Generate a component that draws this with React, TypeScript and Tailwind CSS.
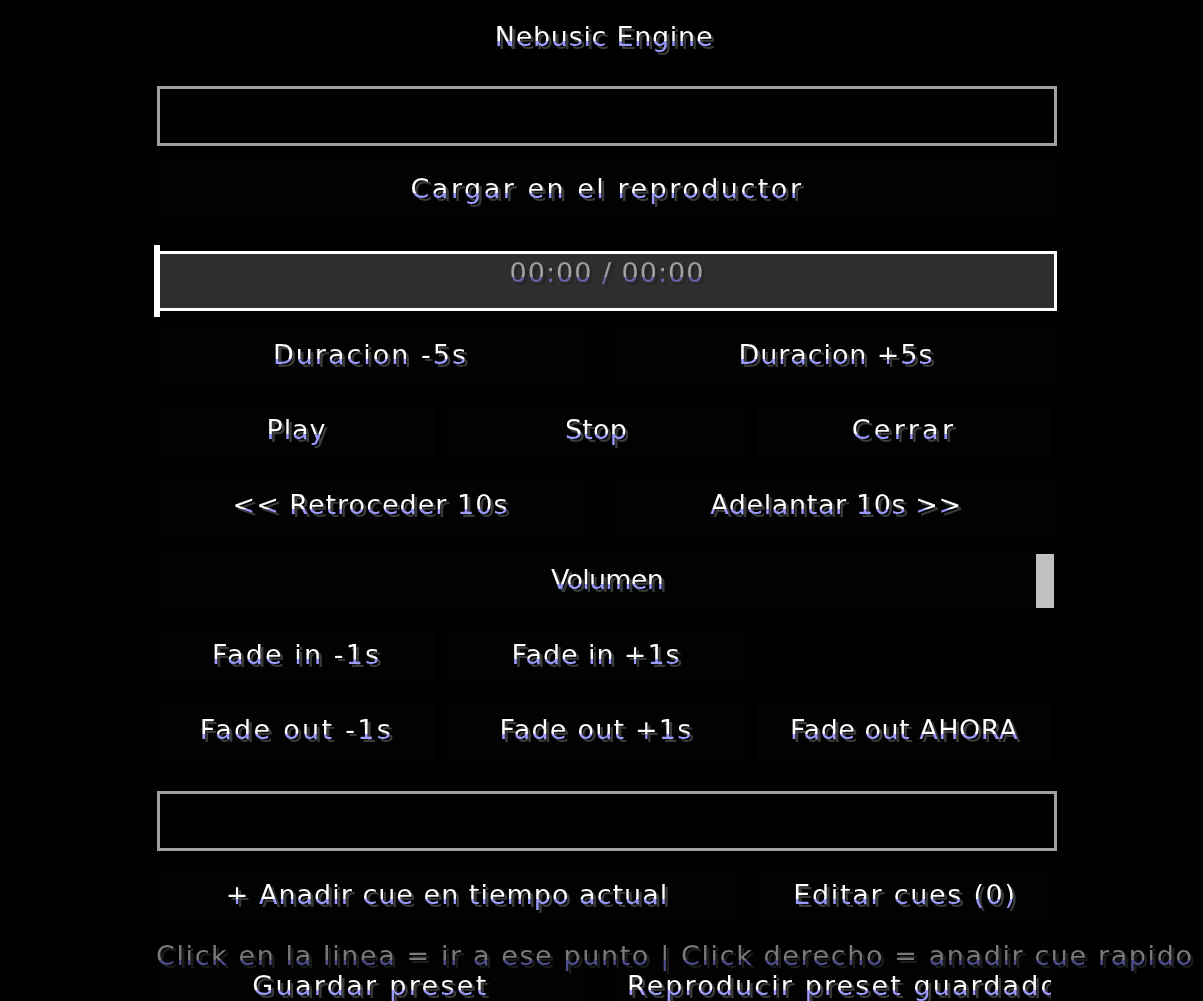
import React from 'react';

type Tone = 'white' | 'grey' | 'dim';

// Minecraft-ish label: white top, lavender bottom rows, hard 1-unit shadow
const TONES: Record<Tone, string> = {
  white: 'bg-[linear-gradient(180deg,#ffffff_19px,#9c9cff_19px)] drop-shadow-[3px_3px_0_#3b3b3b]',
  grey: 'bg-[linear-gradient(180deg,#a0a0a0_19px,#6464a8_19px)] drop-shadow-[3px_3px_0_#262626]',
  dim: 'bg-[linear-gradient(180deg,#7a7a7a_19px,#4e4e8e_19px)] drop-shadow-[3px_3px_0_#1c1c1c]',
};

function McText({ children, tone = 'white', className = '' }: { children: React.ReactNode; tone?: Tone; className?: string }) {
  return (
    <span
      className={`inline-block whitespace-nowrap bg-clip-text text-transparent font-['DejaVu_Sans',sans-serif] text-[27px] leading-[30px] ${TONES[tone]} ${className}`}
    >
      {children}
    </span>
  );
}

function Button({ label, tracking }: { label: string; tracking: string }) {
  return (
    <div className="flex h-[60px] items-center justify-center bg-[#020203] pb-[2px]">
      <McText className={tracking}>{label}</McText>
    </div>
  );
}

function TextField() {
  return <div className="h-[60px] border-[3px] border-[#a0a0a0] bg-black" />;
}

export default function App() {
  return (
    <div className="h-[1001px] w-full overflow-hidden bg-black">
      <div className="ml-[157px] flex w-[900px] flex-col pt-[22px]">
        <div className="flex h-[30px] justify-center pr-[6px]">
          <McText className="tracking-[0.7px]">Nebusic Engine</McText>
        </div>

        <div className="mt-[34px]">
          <TextField />
        </div>

        <div className="mt-[14px]">
          <Button label="Cargar en el reproductor" tracking="tracking-[2.5px]" />
        </div>

        {/* timeline */}
        <div className="relative mt-[31px] flex h-[60px] items-start justify-center border-[3px] border-white bg-[#2e2e2e] pt-[4px]">
          <McText tone="grey" className="tracking-[1px]">00:00 / 00:00</McText>
          <div className="absolute -left-[6px] -top-[9px] h-[72px] w-[6px] bg-white" />
        </div>

        <div className="mt-[15px] grid grid-cols-[427px_442px] gap-x-[31px]">
          <Button label="Duracion -5s" tracking="tracking-[2px]" />
          <Button label="Duracion +5s" tracking="tracking-[0.9px]" />
        </div>

        <div className="mt-[15px] grid grid-cols-[279px_300px_296px] gap-x-[10px]">
          <Button label="Play" tracking="tracking-[0.9px]" />
          <Button label="Stop" tracking="tracking-[0.2px]" />
          <Button label="Cerrar" tracking="tracking-[3.3px]" />
        </div>

        <div className="mt-[15px] grid grid-cols-[427px_442px] gap-x-[31px]">
          <Button label="<< Retroceder 10s" tracking="tracking-[1px]" />
          <Button label="Adelantar 10s >>" tracking="tracking-[0.6px]" />
        </div>

        {/* volume slider */}
        <div className="relative mt-[15px] flex h-[60px] items-center justify-center bg-[#020203] pb-[2px]">
          <McText className="tracking-[-0.8px]">Volumen</McText>
          <div className="absolute right-[3px] top-[3px] h-[54px] w-[18px] bg-[#c0c0c0]" />
        </div>

        <div className="mt-[15px] grid grid-cols-[279px_300px_296px] gap-x-[10px]">
          <Button label="Fade in -1s" tracking="tracking-[2.1px]" />
          <Button label="Fade in +1s" tracking="tracking-[0.9px]" />
        </div>

        <div className="mt-[15px] grid grid-cols-[279px_300px_296px] gap-x-[10px]">
          <Button label="Fade out -1s" tracking="tracking-[2.3px]" />
          <Button label="Fade out +1s" tracking="tracking-[1.2px]" />
          <Button label="Fade out AHORA" tracking="tracking-[0.5px]" />
        </div>

        <div className="mt-[30px]">
          <TextField />
        </div>

        <div className="mt-[15px] grid grid-cols-[580px_296px] gap-x-[20px]">
          <Button label="+ Anadir cue en tiempo actual" tracking="tracking-[1px]" />
          <Button label="Editar cues (0)" tracking="tracking-[1.7px]" />
        </div>

        <div className="-ml-px mt-[15px] h-[16px]">
          <McText tone="dim" className="tracking-[1.6px]">
            Click en la linea = ir a ese punto | Click derecho = anadir cue rapido
          </McText>
        </div>

        <div className="grid grid-cols-[427px_442px] gap-x-[31px]">
          <Button label="Guardar preset" tracking="tracking-[2.3px]" />
          <div className="flex h-[60px] bg-[#020203] pb-[2px] pl-[12px] pr-[6px]">
            <div className="flex w-full items-center overflow-hidden">
              <McText className="tracking-[2.1px]">Reproducir preset guardado</McText>
            </div>
          </div>
        </div>
      </div>
    </div>
  );
}
